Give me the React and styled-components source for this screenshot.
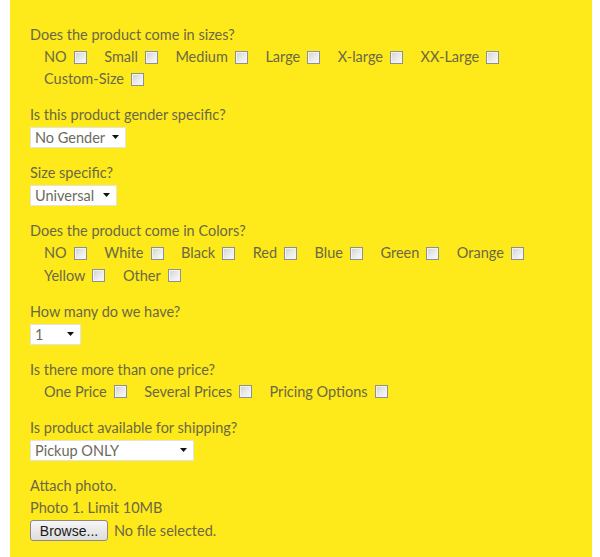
import styled, { createGlobalStyle } from 'styled-components';

const GlobalStyle = createGlobalStyle`
  html, body {
    margin: 0;
    padding: 0;
    background: #ffffff;
  }
`;

const Panel = styled.form`
  box-sizing: border-box;
  margin-left: 10px;
  width: 582px;
  min-height: 100vh;
  padding: 24px 20px 20px 20px;
  background: #feea1a;
  font-family: Lato, 'Liberation Sans', sans-serif;
  font-size: 14.5px;
  color: #6b6846;
`;

const Section = styled.div`
  margin-bottom: 14.1px;
`;

const Question = styled.div`
  line-height: 22px;
`;

const Options = styled.div`
  display: flex;
  flex-wrap: wrap;
  padding-left: 14px;
`;

const Option = styled.label`
  display: inline-flex;
  align-items: center;
  gap: 7px;
  margin-right: 17.5px;
  line-height: 22.1px;
`;

const Check = styled.input.attrs({ type: 'checkbox' })`
  appearance: none;
  margin: 0;
  width: 13px;
  height: 13px;
  border: 1px solid #8f9090;
  box-sizing: border-box;
  background: linear-gradient(135deg, #cfcfcf 0%, #e9e9e9 50%, #fbfbfb 100%);
  box-shadow: inset 0 0 0 1px #f2f2f2;
`;

const SelectWrap = styled.div`
  position: relative;
  display: inline-block;
  margin-top: 1px;
  width: ${({ $w }) => $w}px;
  height: 21px;
`;

const Select = styled.select`
  appearance: none;
  box-sizing: border-box;
  width: 100%;
  height: 100%;
  margin: 0;
  padding: 0 0 0 4px;
  border: 1px solid #e4e4d8;
  border-radius: 0;
  background: #ffffff;
  font-family: Lato, 'Liberation Sans', sans-serif;
  font-size: 14.5px;
  color: #6b6a5c;
`;

const Caret = styled.svg`
  position: absolute;
  right: 7px;
  top: 8px;
  pointer-events: none;
`;

const Line = styled.div`
  line-height: 22px;
`;

const FileRow = styled.div`
  display: flex;
  align-items: center;
  gap: 6px;
  margin-top: 1px;
`;

const BrowseButton = styled.button`
  box-sizing: border-box;
  width: 78px;
  height: 21px;
  padding: 0;
  border: 1px solid #8a8a8a;
  border-radius: 3px;
  background: linear-gradient(#f6f6f6, #dddddd);
  font-family: 'Liberation Sans', Arial, sans-serif;
  font-size: 14px;
  color: #1a1a1a;
`;

const sizes = ['NO', 'Small', 'Medium', 'Large', 'X-large', 'XX-Large', 'Custom-Size'];
const colors = ['NO', 'White', 'Black', 'Red', 'Blue', 'Green', 'Orange', 'Yellow', 'Other'];
const prices = ['One Price', 'Several Prices', 'Pricing Options'];

const CheckGroup = ({ items }) => (
  <Options>
    {items.map((item) => (
      <Option key={item}>
        {item}
        <Check />
      </Option>
    ))}
  </Options>
);

const Dropdown = ({ width, value }) => (
  <SelectWrap $w={width}>
    <Select defaultValue={value}>
      <option>{value}</option>
    </Select>
    <Caret width="7" height="4" viewBox="0 0 7 4">
      <path d="M0 0h7L3.5 4z" fill="#111" />
    </Caret>
  </SelectWrap>
);

const App = () => (
  <>
    <GlobalStyle />
    <Panel>
      <Section>
        <Question>Does the product come in sizes?</Question>
        <CheckGroup items={sizes} />
      </Section>
      <Section>
        <Question>Is this product gender specific?</Question>
        <Dropdown width={96} value="No Gender" />
      </Section>
      <Section>
        <Question>Size specific?</Question>
        <Dropdown width={87} value="Universal" />
      </Section>
      <Section>
        <Question>Does the product come in Colors?</Question>
        <CheckGroup items={colors} />
      </Section>
      <Section>
        <Question>How many do we have?</Question>
        <Dropdown width={51} value="1" />
      </Section>
      <Section>
        <Question>Is there more than one price?</Question>
        <CheckGroup items={prices} />
      </Section>
      <Section>
        <Question>Is product available for shipping?</Question>
        <Dropdown width={164} value="Pickup ONLY" />
      </Section>
      <Section>
        <Line>Attach photo.</Line>
        <Line>Photo 1. Limit 10MB</Line>
        <FileRow>
          <BrowseButton type="button">Browse...</BrowseButton>
          <span>No file selected.</span>
        </FileRow>
      </Section>
    </Panel>
  </>
);

export default App;
